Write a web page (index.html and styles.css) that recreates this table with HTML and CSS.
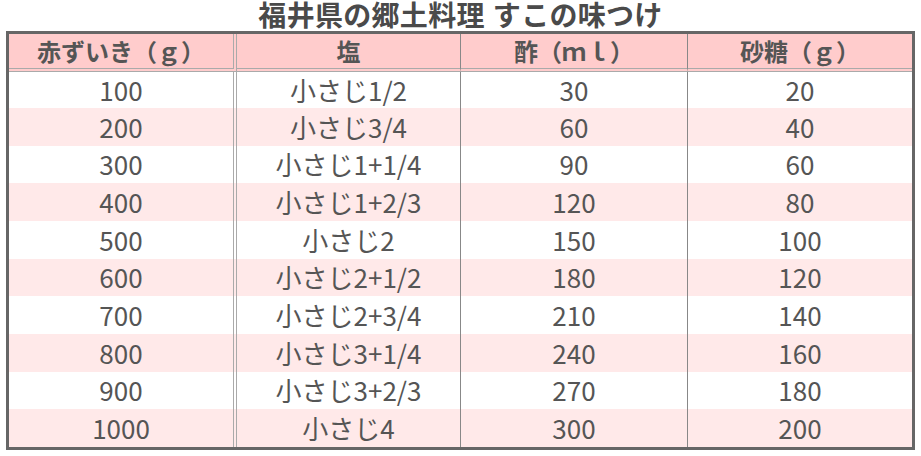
FILE: index.html
```html
<!DOCTYPE html>
<html lang="ja">
<head>
<meta charset="utf-8">
<title>福井県の郷土料理 すこの味つけ</title>
<link rel="stylesheet" href="styles.css">
</head>
<body>
<h1 class="title">福井県の郷土料理 すこの味つけ</h1>
<table class="recipe">
  <colgroup>
    <col class="c1"><col class="c2"><col class="c3"><col class="c4">
  </colgroup>
  <thead>
    <tr><th class="sep-double">赤ずいき（ｇ）</th><th class="sep">塩</th><th class="sep">酢（ｍｌ）</th><th>砂糖（ｇ）</th></tr>
  </thead>
  <tbody>
    <tr class="first"><td class="sep-double">100</td><td class="sep">小さじ1/2</td><td class="sep">30</td><td>20</td></tr>
    <tr class="alt"><td class="sep-double">200</td><td class="sep">小さじ3/4</td><td class="sep">60</td><td>40</td></tr>
    <tr><td class="sep-double">300</td><td class="sep">小さじ1+1/4</td><td class="sep">90</td><td>60</td></tr>
    <tr class="alt"><td class="sep-double">400</td><td class="sep">小さじ1+2/3</td><td class="sep">120</td><td>80</td></tr>
    <tr><td class="sep-double">500</td><td class="sep">小さじ2</td><td class="sep">150</td><td>100</td></tr>
    <tr class="alt"><td class="sep-double">600</td><td class="sep">小さじ2+1/2</td><td class="sep">180</td><td>120</td></tr>
    <tr><td class="sep-double">700</td><td class="sep">小さじ2+3/4</td><td class="sep">210</td><td>140</td></tr>
    <tr class="alt"><td class="sep-double">800</td><td class="sep">小さじ3+1/4</td><td class="sep">240</td><td>160</td></tr>
    <tr><td class="sep-double">900</td><td class="sep">小さじ3+2/3</td><td class="sep">270</td><td>180</td></tr>
    <tr class="alt"><td class="sep-double">1000</td><td class="sep">小さじ4</td><td class="sep">300</td><td>200</td></tr>
  </tbody>
</table>
</body>
</html>
```
FILE: styles.css
```css
html, body {
  margin: 0;
  padding: 0;
  background: #ffffff;
}
body {
  font-family: "Noto Sans CJK JP", "Noto Sans", sans-serif;
  color: #555555;
}
.title {
  margin: 0;
  height: 31px;
  box-sizing: border-box;
  padding-top: 3px;
  line-height: 28px;
  font-family: "Liberation Sans", "Noto Sans CJK JP", sans-serif;
  font-size: 28px;
  font-weight: bold;
  letter-spacing: 0.3px;
  text-align: center;
  color: #4a4a4a;
  white-space: nowrap;
}
.recipe {
  width: 909px;
  margin: 0 auto;
  table-layout: fixed;
  border-collapse: separate;
  border-spacing: 0;
  border: 3px solid #666666;
}
.c1 { width: 228px; }
.c2 { width: 224px; }
.c3 { width: 227px; }
.c4 { width: 224px; }
.recipe th,
.recipe td {
  padding: 0;
  line-height: 1;
  text-align: center;
  vertical-align: middle;
  box-sizing: border-box;
  white-space: nowrap;
}
.recipe th {
  background: #ffcccc;
  font-size: 24px;
  font-weight: bold;
  color: #555555;
  border-bottom: 4px double #aaaaaa;
}
.recipe thead tr { height: 38px; }
.recipe td {
  font-size: 26px;
  font-weight: normal;
  color: #555555;
}
.recipe tbody tr { height: 37.67px; }
.recipe tbody tr.first { height: 36px; }
.recipe tr.alt td { background: #ffe9e9; }
.recipe .sep-double { border-right: 4px double #aaaaaa; }
.recipe .sep { border-right: 1px solid #888888; }
```
